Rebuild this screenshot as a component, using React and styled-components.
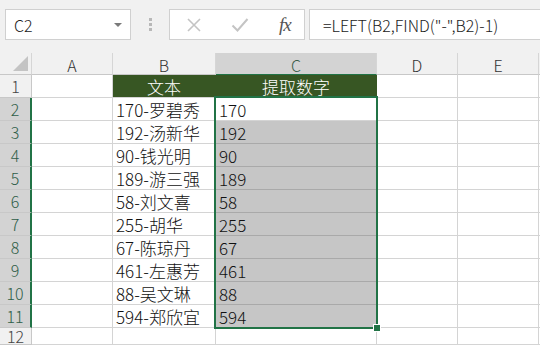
import styled, { createGlobalStyle } from "styled-components"

const GlobalStyle = createGlobalStyle`
	html, body {
		margin: 0;
		padding: 0;
		background: #ffffff;
	}
	body {
		width: 540px;
		height: 345px;
		overflow: hidden;
		font-family: "Noto Sans CJK SC", "Liberation Sans", sans-serif;
	}
`;

const cols = ["A", "B", "C", "D", "E", ""];

const rows = [
	["170-罗碧秀", "170"],
	["192-汤新华", "192"],
	["90-钱光明", "90"],
	["189-游三强", "189"],
	["58-刘文喜", "58"],
	["255-胡华", "255"],
	["67-陈琼丹", "67"],
	["461-左惠芳", "461"],
	["88-吴文琳", "88"],
	["594-郑欣宜", "594"],
];

const CrossIcon = () => (
	<svg width="16" height="16" viewBox="0 0 16 16">
		<path d="M2 2 L14 14 M14 2 L2 14" stroke="#c4c4c4" strokeWidth="1.6" fill="none"/>
	</svg>
);

const CheckIcon = () => (
	<svg width="18" height="16" viewBox="0 0 18 16">
		<path d="M1.5 8.5 L6.5 13.5 L16.5 2" stroke="#c4c4c4" strokeWidth="2" fill="none"/>
	</svg>
);

export default function App() {
	return (
		<>
			<GlobalStyle/>
			<Page>
				<Toolbar>
					<NameBox>
						C2
						<DropArrow/>
					</NameBox>
					<Grip>
						<span/><span/><span/>
					</Grip>
					<ButtonBox>
						<ToolBtn><CrossIcon/></ToolBtn>
						<ToolBtn><CheckIcon/></ToolBtn>
						<Fx>fx</Fx>
					</ButtonBox>
					<FormulaBox>=LEFT(B2,FIND("-",B2)-1)</FormulaBox>
				</Toolbar>
				<Sheet>
					<Corner><CornerTri/></Corner>
					{cols.map((c, i) => (
						<ColHead key={i} $active={c === "C"}>{c}</ColHead>
					))}

					<RowHead>1</RowHead>
					<Cell/>
					<Cell $head $center>文本</Cell>
					<Cell $head $center>提取数字</Cell>
					<Cell/>
					<Cell/>
					<Cell/>

					{rows.map((r, i) => (
						<Row key={i} n={i + 2} text={r[0]} value={r[1]} first={i === 0}/>
					))}

					<RowHead>12</RowHead>
					<Cell/>
					<Cell/>
					<Cell/>
					<Cell/>
					<Cell/>
					<Cell/>

					<Selection>
						<FillHandle/>
					</Selection>
				</Sheet>
			</Page>
		</>
	)
}

const Row = ({n, text, value, first}) => (
	<>
		<RowHead $active>{n}</RowHead>
		<Cell/>
		<Cell>{text}</Cell>
		<Cell $sel={!first}>{value}</Cell>
		<Cell/>
		<Cell/>
		<Cell/>
	</>
);

const Page = styled.div`
	width: 540px;
	height: 345px;
	display: flex;
	flex-direction: column;
	background: #f1f1f1;
`;

const Toolbar = styled.div`
	height: 53px;
	flex: none;
	display: flex;
	align-items: flex-start;
	padding: 9px 0 0 5px;
	box-sizing: border-box;
`;

const NameBox = styled.div`
	position: relative;
	width: 126px;
	height: 31px;
	box-sizing: border-box;
	border: 1px solid #d0d0d0;
	background: #ffffff;
	display: flex;
	align-items: center;
	padding-left: 8px;
	font-family: "Noto Sans CJK SC", sans-serif;
	font-weight: 300;
	font-size: 16px;
	color: #222;
`;

const DropArrow = styled.span`
	position: absolute;
	right: 8px;
	top: 13px;
	border-left: 4px solid transparent;
	border-right: 4px solid transparent;
	border-top: 4px solid #7a7a7a;
`;

const Grip = styled.div`
	width: 38px;
	height: 31px;
	display: flex;
	flex-direction: column;
	align-items: center;
	justify-content: center;
	gap: 2px;

	& > span {
		width: 3px;
		height: 3px;
		background: #b8b8b8;
	}
`;

const ButtonBox = styled.div`
	width: 136px;
	height: 31px;
	box-sizing: border-box;
	border: 1px solid #d0d0d0;
	background: #ffffff;
	display: flex;
	align-items: center;
	padding-left: 15px;
	gap: 28px;
`;

const ToolBtn = styled.span`
	display: flex;
	align-items: center;
	justify-content: center;
	width: 18px;
`;

const Fx = styled.span`
	font-family: "Liberation Serif", serif;
	font-style: italic;
	font-size: 19px;
	color: #555;
	margin-left: 2px;
	letter-spacing: -1px;
`;

const FormulaBox = styled.div`
	flex: 1;
	height: 31px;
	margin-left: 4px;
	box-sizing: border-box;
	border: 1px solid #d0d0d0;
	border-right: none;
	background: #ffffff;
	display: flex;
	align-items: center;
	padding-left: 13px;
	font-family: "Noto Sans CJK SC", sans-serif;
	font-weight: 300;
	font-size: 16px;
	color: #222;
	white-space: nowrap;
`;

const Sheet = styled.div`
	position: relative;
	flex: 1;
	display: grid;
	grid-template-columns: 32px 81px 103px 161px 81px 81px 1fr;
	grid-template-rows: 22px repeat(11, 23px) 1fr;
	background: #ffffff;
	overflow: hidden;
`;

const Corner = styled.div`
	position: relative;
	background: #f1f1f1;
	border-right: 1px solid #d6d6d6;
	border-bottom: 1px solid #c8c8c8;
	box-sizing: border-box;
`;

const CornerTri = styled.span`
	position: absolute;
	right: 3px;
	bottom: 3px;
	width: 0;
	height: 0;
	border-left: 15px solid transparent;
	border-bottom: 15px solid #c4c4c4;
`;

const ColHead = styled.div`
	background: ${p => p.$active ? "#d3d3d3" : "#f1f1f1"};
	border-right: 1px solid #d6d6d6;
	border-bottom: 1px solid ${p => p.$active ? "#217346" : "#c8c8c8"};
	box-sizing: border-box;
	display: flex;
	align-items: center;
	justify-content: center;
	font-family: "Noto Sans CJK SC", sans-serif;
	font-weight: 300;
	font-size: 16px;
	line-height: 1;
	color: ${p => p.$active ? "#3b5d4a" : "#333"};
	padding-top: 2px;
`;

const RowHead = styled.div`
	background: ${p => p.$active ? "#d3d3d3" : "#f1f1f1"};
	border-right: ${p => p.$active ? "2px solid #217346" : "1px solid #c8c8c8"};
	border-bottom: 1px solid #c8c8c8;
	box-sizing: border-box;
	display: flex;
	align-items: center;
	justify-content: center;
	font-family: "Noto Sans CJK SC", sans-serif;
	font-weight: 300;
	font-size: 16px;
	line-height: 1;
	color: ${p => p.$active ? "#2f5e48" : "#444"};
`;

const Cell = styled.div`
	background: ${p => p.$head ? "#375623" : p.$sel ? "#c6c6c6" : "#ffffff"};
	color: ${p => p.$head ? "#ffffff" : "#111"};
	border-right: 1px solid ${p => p.$head ? "#375623" : p.$sel ? "#a9a9a9" : "#d4d4d4"};
	border-bottom: 1px solid ${p => p.$sel ? "#a9a9a9" : "#d4d4d4"};
	box-sizing: border-box;
	display: flex;
	align-items: center;
	justify-content: ${p => p.$center ? "center" : "flex-start"};
	padding-left: ${p => p.$center ? "0" : "3px"};
	font-family: "Noto Sans CJK SC", sans-serif;
	font-weight: 300;
	font-size: 17px;
	line-height: 1;
	white-space: nowrap;
	overflow: hidden;
`;

const Selection = styled.div`
	position: absolute;
	grid-column: 4 / 5;
	grid-row: 3 / 13;
	top: -2px;
	left: -2px;
	right: -1px;
	bottom: -1px;
	border: 2px solid #217346;
	pointer-events: none;
`;

const FillHandle = styled.span`
	position: absolute;
	right: -5px;
	bottom: -5px;
	width: 6px;
	height: 6px;
	background: #217346;
	border: 1px solid #ffffff;
`;
